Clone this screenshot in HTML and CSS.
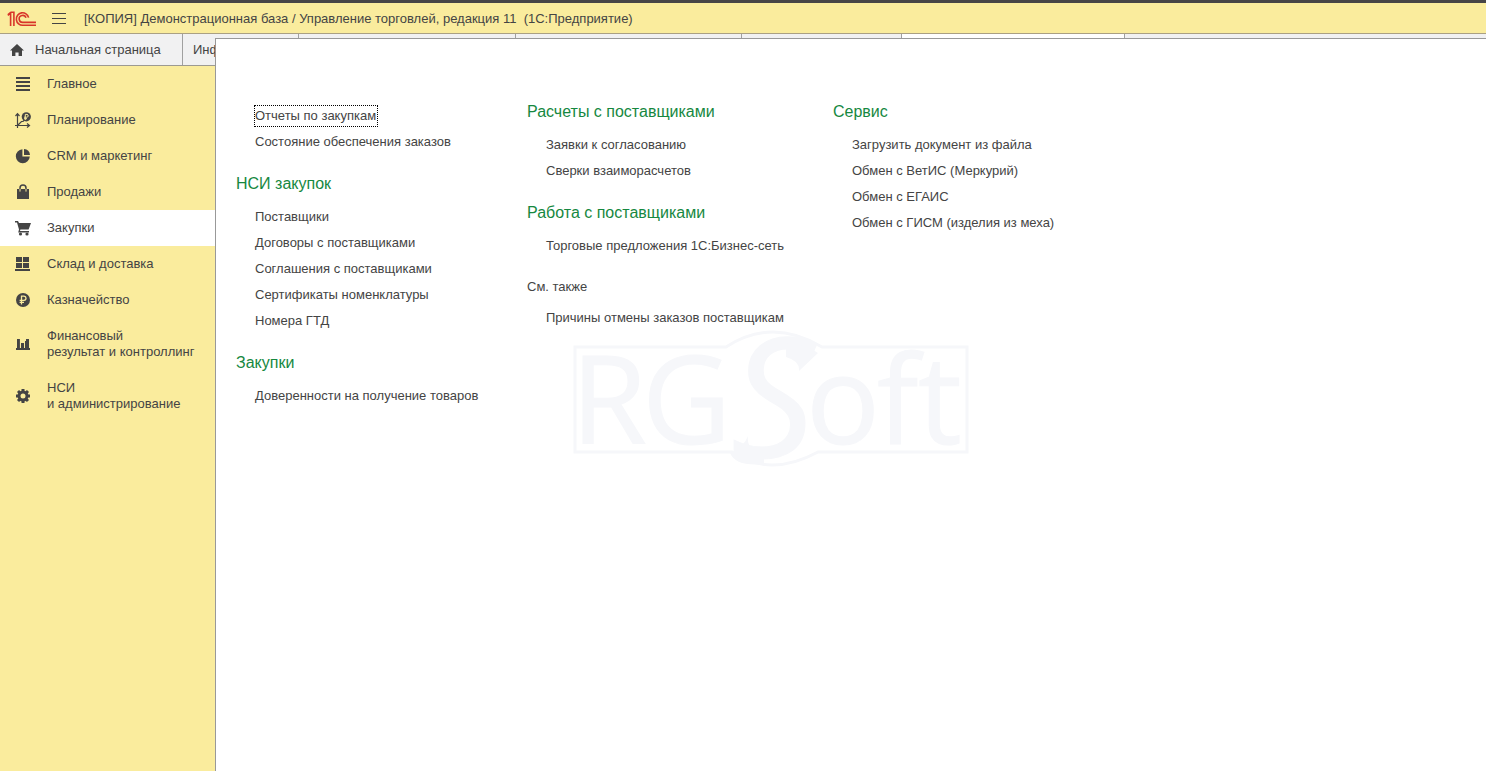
FILE: index.html
```
<!DOCTYPE html>
<html lang="ru">
<head>
<meta charset="utf-8">
<title>Управление торговлей, редакция 11</title>
<link rel="stylesheet" href="styles.css">
</head>
<body>
<header class="titlebar">
  <svg class="logo" viewBox="0 0 30 16" width="30" height="16" aria-label="1C" role="img">
    <g fill="none" stroke="#d8352a" stroke-width="1.6">
      <path d="M.8 4.4 3.6 2.2V15M3.4 1.3H6.9V15M1 3.6 4 1.2"/>
      <path d="M21.6 6.6A6.2 6.2 0 1 0 16 14.2H29"/>
      <path d="M19 6.8A3.5 3.5 0 1 0 16 11.4H29"/>
    </g>
  </svg>
  <button class="menu-button" aria-label="Меню">
    <svg viewBox="0 0 14 12" width="14" height="12"><path d="M0 .5H14M0 5.5H14M0 10.5H14" stroke="#444" fill="none"/></svg>
  </button>
  <h1 class="title">[КОПИЯ] Демонстрационная база / Управление торговлей, редакция 11&nbsp; (1С:Предприятие)</h1>
</header>
<nav class="tabs" aria-label="Открытые окна">
  <button class="tab tab-home">
    <svg viewBox="0 0 14 12" width="14" height="12"><path fill="#444" d="M7 0 14 6.6H12V12H8.6V8.4H5.4V12H2V6.6H0Z"/></svg>
    Начальная страница
  </button>
  <button class="tab tab-info">Инф</button>
  <button class="tab tab-a" aria-label="Окно 3"></button>
  <button class="tab tab-b" aria-label="Окно 4"></button>
  <button class="tab tab-c" aria-label="Окно 5"></button>
  <button class="tab tab-d active" aria-label="Окно 6"></button>
</nav>
<div class="workspace">
  <nav class="sidebar" aria-label="Разделы">
    <a class="section" href="#"><svg class="icon" viewBox="0 0 16 16"><path stroke="#444" stroke-width="2" d="M1 2H15M1 6H15M1 10H15M1 14H15"/></svg>Главное</a>
    <a class="section" href="#"><svg class="icon" viewBox="0 0 16 16"><g fill="none" stroke="#444" stroke-width="1.2"><path d="M2.5 16V2M.5 4 2.5 1.6 4.5 4M0 13.5H14M12 11.5 14.5 13.5 12 15.5M3 13 6.5 9.5H8L10 7.5"/></g><circle cx="11.3" cy="4.8" r="4.6" fill="#444"/><path d="M10.3 8V2.4H12Q13.4 2.6 13.2 4 13 5.2 11.8 5.2H9M9 6.7H12" fill="none" stroke="#faec9d"/></svg>Планирование</a>
    <a class="section" href="#"><svg class="icon" viewBox="0 0 16 16"><path fill="#444" d="M7.4 1.2V8.6H14.8A7 7 0 1 1 7.4 1.2ZM9 1A6.6 6.6 0 0 1 15 7H9Z"/></svg>CRM и маркетинг</a>
    <a class="section" href="#"><svg class="icon" viewBox="0 0 16 16"><path fill="#444" d="M2 5H14V15H2Z"/><path d="M5 8V4Q5 1 8 1T11 4V8" fill="none" stroke="#444" stroke-width="1.5"/><path d="M5 5V7.6M11 5V7.6" stroke="#faec9d"/></svg>Продажи</a>
    <a class="section current" href="#" aria-current="page"><svg class="icon" viewBox="0 0 16 16"><path fill="#444" d="M0 1H3L4 3H16L13.6 9.5H5.4L5 11H14V12.4H3.2L4 9.5 2 2.4H0Z"/><circle cx="5.5" cy="14" r="1.6" fill="#444"/><circle cx="12" cy="14" r="1.6" fill="#444"/></svg>Закупки</a>
    <a class="section" href="#"><svg class="icon" viewBox="0 0 16 16"><path fill="#444" d="M1 1H7V6H1ZM8 1H14V6H8ZM1 7H7V12H1ZM8 7H14V12H8ZM0 13H15V15H0Z"/></svg>Склад и доставка</a>
    <a class="section" href="#"><svg class="icon" viewBox="0 0 16 16"><circle cx="8" cy="8" r="7" fill="#444"/><path d="M6.5 12.5V4.2H9Q11 4.4 11 6.3T9 8.3H4.6M4.6 10.4H9" fill="none" stroke="#faec9d" stroke-width="1.3"/></svg>Казначейство</a>
    <a class="section" href="#"><svg class="icon" viewBox="0 0 16 16"><path fill="#444" d="M2 3H5V12H2ZM6 7H9V12H6ZM10 5H11V3H14V12H10ZM1 12H15V14H1Z"/><path stroke="#faec9d" stroke-width=".8" d="M5.4 3V12M9.5 3V12"/></svg><span>Финансовый<br>результат и контроллинг</span></a>
    <a class="section" href="#"><svg class="icon" viewBox="0 0 16 16"><circle cx="8" cy="8" r="4" fill="none" stroke="#444" stroke-width="3"/><path stroke="#444" stroke-width="3" d="M8 1V3.4M8 12.6V15M1 8H3.4M12.6 8H15M3 3 4.8 4.8M11.2 11.2 13 13M13 3 11.2 4.8M4.8 11.2 3 13"/></svg><span>НСИ<br>и администрирование</span></a>
  </nav>
  <main class="panel">
    <svg class="watermark" viewBox="0 0 400 140" aria-hidden="true">
      <g fill="none" stroke="#f6f7fa" stroke-width="3">
        <path d="M154 18H3V123H160Q198 149 246 123H395V18H250Q200-12 154 18Z"/>
      </g>
      <g fill="#f6f7fa" stroke="#f6f7fa">
        <text class="mark" y="115"><tspan x="-1">R</tspan><tspan x="70">G</tspan></text>
        <text class="mark-s" x="159" y="128">S</text>
        <text class="mark" y="115"><tspan x="234">o</tspan><tspan x="305">f</tspan><tspan x="346">t</tspan></text>
      </g>
      <path fill="#f6f7fa" d="M214 14Q236 16 246 24L227 42Q228 32 214 28ZM176 107Q172 118 158 124Q164 138 192 135V124Q174 122 176 107Z"/>
    </svg>
    <div class="columns">
      <div class="column column-main">
        <ul class="links">
          <li><a class="focused" href="#">Отчеты по закупкам</a></li>
          <li><a href="#">Состояние обеспечения заказов</a></li>
        </ul>
        <h2>НСИ закупок</h2>
        <ul class="links">
          <li><a href="#">Поставщики</a></li>
          <li><a href="#">Договоры с поставщиками</a></li>
          <li><a href="#">Соглашения с поставщиками</a></li>
          <li><a href="#">Сертификаты номенклатуры</a></li>
          <li><a href="#">Номера ГТД</a></li>
        </ul>
        <h2>Закупки</h2>
        <ul class="links">
          <li><a href="#">Доверенности на получение товаров</a></li>
        </ul>
      </div>
      <div class="column">
        <h2>Расчеты с поставщиками</h2>
        <ul class="links">
          <li><a href="#">Заявки к согласованию</a></li>
          <li><a href="#">Сверки взаиморасчетов</a></li>
        </ul>
        <h2>Работа с поставщиками</h2>
        <ul class="links">
          <li><a href="#">Торговые предложения 1С:Бизнес-сеть</a></li>
        </ul>
        <h3>См. также</h3>
        <ul class="links">
          <li><a href="#">Причины отмены заказов поставщикам</a></li>
        </ul>
      </div>
      <div class="column">
        <h2>Сервис</h2>
        <ul class="links">
          <li><a href="#">Загрузить документ из файла</a></li>
          <li><a href="#">Обмен с ВетИС (Меркурий)</a></li>
          <li><a href="#">Обмен с ЕГАИС</a></li>
          <li><a href="#">Обмен с ГИСМ (изделия из меха)</a></li>
        </ul>
      </div>
    </div>
  </main>
</div>
</body>
</html>
```
FILE: styles.css
```
* { box-sizing: border-box; }
body {
  margin: 0;
  min-height: 100vh;
  display: flex;
  flex-direction: column;
  position: relative;
  overflow: hidden;
  background: #faec9d;
  color: #444;
  font: 13px/16px "Liberation Sans", Arial, sans-serif;
}
button { font: inherit; color: inherit; background: none; border: 0; padding: 0; }
a { color: inherit; text-decoration: none; }
h1, h2, h3, ul { margin: 0; padding: 0; font-weight: normal; }
ul { list-style: none; }

.titlebar {
  display: flex;
  align-items: center;
  height: 34px;
  padding: 2px 0 0 7px;
  border-top: 3px solid #474546;
  border-bottom: 1px solid #aaa083;
}
.logo { margin-right: 15px; }
.menu-button { display: flex; margin-right: 18px; }
.title { font-size: 13px; white-space: pre; }

.tabs {
  display: flex;
  height: 32px;
  background: #f1f1f2;
  border-bottom: 1px solid #9c9a92;
}
.tab {
  display: flex;
  align-items: center;
  flex: none;
  border-right: 1px solid #a0a0a0;
}
.tab-home { width: 183px; padding-left: 10px; gap: 11px; }
.tab-info { width: 116px; padding-left: 10px; }
.tab-a { width: 217px; }
.tab-b { width: 226px; }
.tab-c { width: 160px; }
.tab-d { width: 223px; }
.tab.active { background: #fff; }

.workspace { flex: 1; display: flex; }
.sidebar { width: 215px; }
.section {
  display: flex;
  align-items: center;
  gap: 16px;
  padding: 10px 0 10px 15px;
}
.section.current { background: #fff; }
.icon { width: 16px; height: 16px; flex: none; }

/* The section menu opens over the lower part of the tab strip. */
.panel {
  position: absolute;
  top: 38px;
  right: 0;
  bottom: 0;
  left: 215px;
  padding: 63px 20px 0;
  background: #fff;
  border-top: 1px solid #999;
  border-left: 1px solid #999;
}
.watermark {
  position: absolute;
  top: 290px;
  left: 356px;
  width: 400px;
  height: 140px;
  overflow: visible;
}
.mark { font: 123px "Open Sans", sans-serif; }
.mark-s { font: italic 166px "Open Sans", sans-serif; }

.columns {
  position: relative;
  display: grid;
  grid-template-columns: 248px 263px 1fr;
  gap: 43px;
}
.column-main { padding-top: 1px; }
.column h2 {
  margin: 19px 0 10px;
  color: #16883f;
  font-size: 16px;
  line-height: 20px;
}
.column h3 {
  margin: 20px 0 10px;
  font-size: 13px;
  line-height: 16px;
}
.column > :first-child { margin-top: 0; }
.links { padding-left: 19px; }
.links li { line-height: 26px; white-space: nowrap; }
.focused { padding: 2px 1px 3px 0; outline: 1px dotted #000; }
```
